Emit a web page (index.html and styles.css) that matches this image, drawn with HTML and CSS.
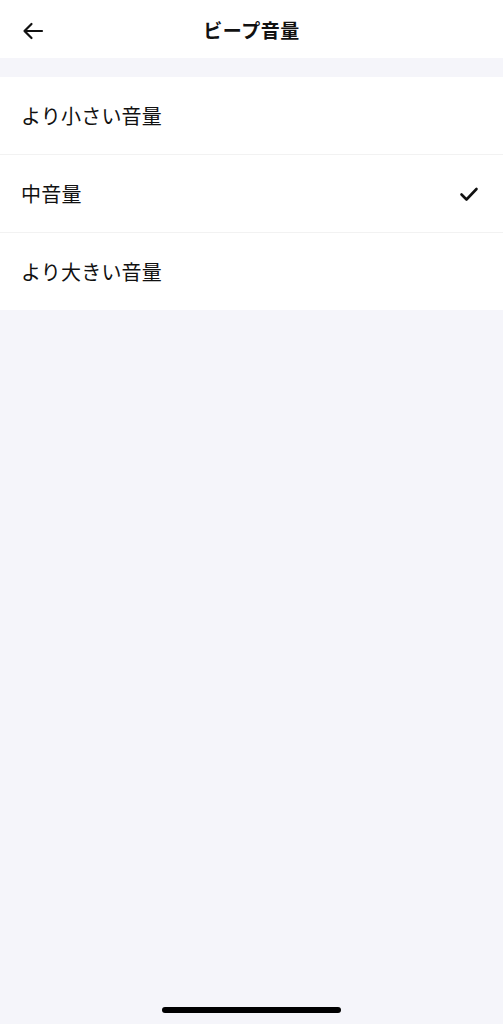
FILE: index.html
```html
<!doctype html>
<html lang="ja">
<head>
  <meta charset="UTF-8">
  <meta name="viewport" content="width=device-width, initial-scale=1.0">
  <title>ビープ音量</title>
  <link rel="stylesheet" href="styles.css">
</head>
<body>
  <div id="app">
    <div class="header">
      <div class="back">
        <svg width="22" height="18" viewBox="0 0 22 18">
          <path d="M20 9H2.5M9.5 2L2.5 9l7 7" fill="none" stroke="#111" stroke-width="2.2" stroke-linecap="round" stroke-linejoin="round"/>
        </svg>
      </div>
      <div class="title">ビープ音量</div>
    </div>
    <div class="gap"></div>
    <div class="list">
      <div class="item">より小さい音量</div>
      <div class="item">
        中音量
        <svg class="check" width="20" height="16" viewBox="0 0 20 16">
          <path d="M2.5 8.5l5 5L17.5 3" fill="none" stroke="#111" stroke-width="2.6" stroke-linecap="round" stroke-linejoin="round"/>
        </svg>
      </div>
      <div class="item">より大きい音量</div>
    </div>
    <div class="home-bar"></div>
  </div>
</body>
</html>
```
FILE: styles.css
```css
body {
    margin: 0;
    background: #f5f5fa;
    font-family: "Noto Sans CJK JP", "Noto Sans", sans-serif;
    color: #111;
}

#app {
    position: relative;
    width: 503px;
    height: 1024px;
}

.header {
    height: 58px;
    background: #fff;
    display: flex;
    align-items: center;
    justify-content: center;
    position: relative;
}

.back {
    position: absolute;
    left: 22px;
    top: 21px;
    width: 22px;
    height: 18px;
}

.title {
    font-size: 19px;
    font-weight: 700;
    letter-spacing: 0.5px;
    margin-top: 1px;
}

.gap {
    height: 19px;
}

.list {
    background: #fff;
}

.item {
    height: 77px;
    display: flex;
    align-items: center;
    justify-content: space-between;
    padding: 0 24px 0 21px;
    font-size: 20px;
    letter-spacing: 0.2px;
    border-bottom: 1px solid #f2f2f2;
}

.item:last-child {
    border-bottom: none;
}

.home-bar {
    position: absolute;
    left: 162px;
    top: 1007px;
    width: 179px;
    height: 6px;
    border-radius: 3px;
    background: #000;
}
```
